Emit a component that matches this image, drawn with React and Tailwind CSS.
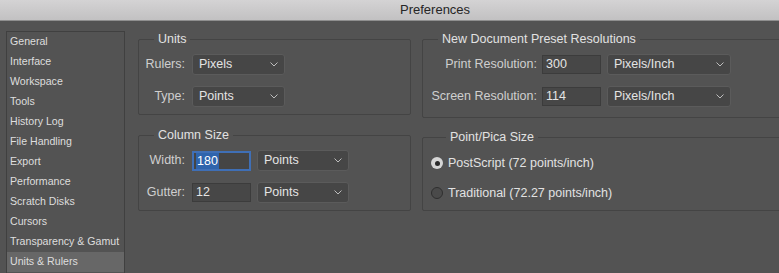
import React from "react";

const sections = [
  "General",
  "Interface",
  "Workspace",
  "Tools",
  "History Log",
  "File Handling",
  "Export",
  "Performance",
  "Scratch Disks",
  "Cursors",
  "Transparency & Gamut",
  "Units & Rulers",
];

function Chevron() {
  return (
    <svg width="8" height="5" viewBox="0 0 8 5" className="shrink-0">
      <polyline points="0.5,0.5 4,4 7.5,0.5" fill="none" stroke="#bdbdbd" strokeWidth="1" />
    </svg>
  );
}

function Select({ value, width }) {
  return (
    <div
      className={`flex items-center justify-between h-[21px] ${width} pl-[6px] pr-[6px] bg-[#464646] border border-[#5b5b5b] rounded-[3px] text-[12.5px] text-[#e4e4e4]`}
    >
      <span>{value}</span>
      <Chevron />
    </div>
  );
}

function Field({ value, width, focused }) {
  if (focused) {
    return (
      <div className={`flex items-center h-[20px] ${width} pl-[2px] bg-[#454545] border-2 border-[#3f6fb6] text-[12.5px] text-white`}>
        <span className="bg-[#2f64ac] leading-[16px] px-[1px]">{value}</span>
      </div>
    );
  }
  return (
    <div className={`flex items-center h-[19px] ${width} pl-[3px] bg-[#474747] border border-[#3c3c3c] text-[12.5px] text-[#e4e4e4]`}>
      {value}
    </div>
  );
}

function Group({ title, className, children }) {
  return (
    <fieldset className={`border border-[#444444] rounded-[2px] ${className}`}>
      <legend className="ml-[15px] px-[4px] text-[12.5px] leading-[16px] text-[#e2e2e2]">{title}</legend>
      {children}
    </fieldset>
  );
}

function Radio({ checked, label }) {
  return (
    <div className="flex items-center h-[20px] gap-[5px]">
      {checked ? (
        <span className="w-[12px] h-[12px] rounded-full bg-[#d6d6d6] flex items-center justify-center">
          <span className="w-[5px] h-[5px] rounded-full bg-[#2a2a2a]" />
        </span>
      ) : (
        <span className="w-[12px] h-[12px] rounded-full bg-[#4a4a4a] border border-[#2f2f2f]" />
      )}
      <span className="text-[12.5px] text-[#e2e2e2]">{label}</span>
    </div>
  );
}

export default function App() {
  return (
    <div
      className="w-[779px] h-[273px] overflow-hidden bg-[#535353] select-none"
      style={{ fontFamily: '"Liberation Sans", Arial, sans-serif' }}
    >
      {/* Title bar */}
      <div className="h-[21px] bg-gradient-to-b from-[#d4d3d4] to-[#c2c1c2] border-b border-[#8f8f8f] flex items-center">
        <span className="ml-[400px] text-[13px] text-[#262626]">Preferences</span>
      </div>

      <div className="flex pt-[10px] pl-[6px]">
        {/* Sidebar */}
        <div className="w-[119px] h-[260px] shrink-0 border border-[#404040]">
          {sections.map((s) => (
            <div
              key={s}
              className={`h-[20px] flex items-center pl-[3px] text-[10.6px] whitespace-nowrap text-[#dedede] ${
                s === "Units & Rulers" ? "bg-[#676767]" : ""
              }`}
            >
              {s}
            </div>
          ))}
        </div>

        {/* Left column */}
        <div className="ml-[13px] w-[273px] shrink-0">
          <Group title="Units" className="pt-[7px] pb-[7px]">
            <div className="flex flex-col gap-[11px]">
              <div className="flex items-center gap-[7px]">
                <span className="w-[46px] text-right text-[12.5px] text-[#cfcfcf]">Rulers:</span>
                <Select value="Pixels" width="w-[93px]" />
              </div>
              <div className="flex items-center gap-[7px]">
                <span className="w-[46px] text-right text-[12.5px] text-[#cfcfcf]">Type:</span>
                <Select value="Points" width="w-[93px]" />
              </div>
            </div>
          </Group>

          <Group title="Column Size" className="mt-[12px] pt-[7px] pb-[7px]">
            <div className="flex flex-col gap-[11px]">
              <div className="flex items-center gap-[6px]">
                <span className="w-[46px] text-right text-[12.5px] text-[#cfcfcf] mr-[1px]">Width:</span>
                <Field value="180" width="w-[59px]" focused />
                <Select value="Points" width="w-[92px]" />
              </div>
              <div className="flex items-center gap-[6px]">
                <span className="w-[46px] text-right text-[12.5px] text-[#cfcfcf] mr-[1px]">Gutter:</span>
                <Field value="12" width="w-[59px]" />
                <Select value="Points" width="w-[92px]" />
              </div>
            </div>
          </Group>
        </div>

        {/* Right column */}
        <div className="ml-[11px] w-[370px] shrink-0">
          <Group title="New Document Preset Resolutions" className="pt-[7px] pb-[10px]">
            <div className="flex flex-col gap-[11px]">
              <div className="flex items-center">
                <span className="w-[114px] text-right text-[12.5px] text-[#cfcfcf]">Print Resolution:</span>
                <div className="ml-[5px]">
                  <Field value="300" width="w-[59px]" />
                </div>
                <div className="ml-[6px]">
                  <Select value="Pixels/Inch" width="w-[124px]" />
                </div>
              </div>
              <div className="flex items-center">
                <span className="w-[114px] text-right text-[12.5px] text-[#cfcfcf]">Screen Resolution:</span>
                <div className="ml-[5px]">
                  <Field value="114" width="w-[59px]" />
                </div>
                <div className="ml-[6px]">
                  <Select value="Pixels/Inch" width="w-[124px]" />
                </div>
              </div>
            </div>
          </Group>

          <Group title="Point/Pica Size" className="mt-[11px] pt-[8px] pb-[7px] pl-[8px]">
            <div className="flex flex-col gap-[10px]">
              <Radio checked label="PostScript (72 points/inch)" />
              <Radio label="Traditional (72.27 points/inch)" />
            </div>
          </Group>
        </div>
      </div>
    </div>
  );
}
